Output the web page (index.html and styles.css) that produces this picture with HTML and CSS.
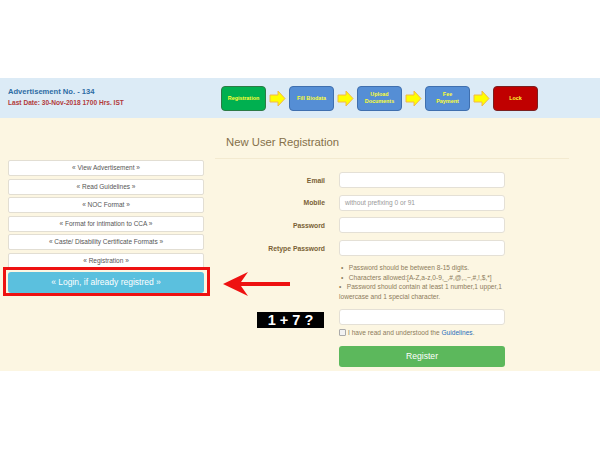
FILE: index.html
```html
<!DOCTYPE html>
<html>
  <head>
    <title>New User Registration</title>
    <link rel="stylesheet" href="styles.css">
  </head>
  <body>
    <div class="top-gap"></div>
    <div class="ad-bar">
      <div class="ad-info">
        <div class="ad-no">Advertisement No. - 134</div>
        <div class="ad-date">Last Date: 30-Nov-2018 1700 Hrs. IST</div>
      </div>
      <div class="steps">
        <div class="step done">Registration</div>
        <svg class="step-arrow" viewBox="0 0 17 17"><polygon points="1,5 9,5 9,1 16,8.5 9,16 9,12 1,12"/></svg>
        <div class="step">Fill Biodata</div>
        <svg class="step-arrow" viewBox="0 0 17 17"><polygon points="1,5 9,5 9,1 16,8.5 9,16 9,12 1,12"/></svg>
        <div class="step">Upload<br>Documents</div>
        <svg class="step-arrow" viewBox="0 0 17 17"><polygon points="1,5 9,5 9,1 16,8.5 9,16 9,12 1,12"/></svg>
        <div class="step">Fee<br>Payment</div>
        <svg class="step-arrow" viewBox="0 0 17 17"><polygon points="1,5 9,5 9,1 16,8.5 9,16 9,12 1,12"/></svg>
        <div class="step lock">Lock</div>
      </div>
    </div>

    <div class="panel">
      <div class="side">
        <a class="side-btn">« View Advertisement »</a>
        <a class="side-btn">« Read Guidelines »</a>
        <a class="side-btn">« NOC Format »</a>
        <a class="side-btn">« Format for intimation to CCA »</a>
        <a class="side-btn">« Caste/ Disability Certificate Formats »</a>
        <a class="side-btn">« Registration »</a>
        <a class="login-btn">« Login, if already registred »</a>
      </div>

      <div class="main">
        <h2 class="title">New User Registration</h2>
        <div class="form">
          <div class="row first">
            <label>Email</label>
            <div class="field"></div>
          </div>
          <div class="row">
            <label>Mobile</label>
            <div class="field placeholder">without prefixing 0 or 91</div>
          </div>
          <div class="row">
            <label>Password</label>
            <div class="field"></div>
          </div>
          <div class="row">
            <label>Retype Password</label>
            <div class="field"></div>
          </div>
          <div class="notes">
            <div>&bull;&nbsp;&nbsp; Password should be between 8-15 digits.</div>
            <div>&bull;&nbsp;&nbsp; Characters allowed:[A-Z,a-z,0-9,_,#,@,.,~,#,!,$,*]</div>
            <div>&bull;&nbsp;&nbsp; Password should contain at least 1 number,1 upper,1 lowercase and 1 special character.</div>
          </div>
          <div class="row captcha-row">
            <label><span class="captcha">1 + 7 ?</span></label>
            <div class="field"></div>
          </div>
          <div class="agree">
            <span class="box"></span>I have read and understood the <a>Guidelines</a>.
          </div>
          <div class="register">Register</div>
        </div>
      </div>

      <div class="mark-frame"></div>
      <svg class="mark-arrow" viewBox="0 0 70 26">
        <polygon points="1,13 26,1 19,11 68,11 68,15 19,15 26,25"/>
      </svg>
    </div>
  </body>
</html>
```

FILE: styles.css
```css
body {
  margin: 0;
  background: #fff;
  font-family: "Liberation Sans", Arial, sans-serif;
  color: #555;
}

.top-gap {
  height: 78px;
}

.ad-bar {
  display: flex;
  align-items: center;
  height: 40px;
  background: #dcebf6;
}

.ad-info {
  width: 213px;
  padding-left: 8px;
  padding-bottom: 4px;
}

.ad-no {
  font-size: 7.6px;
  font-weight: bold;
  color: #2e6da4;
  line-height: 13px;
}

.ad-date {
  font-size: 6.6px;
  font-weight: bold;
  color: #b23a3a;
  line-height: 10px;
}

.steps {
  display: flex;
  align-items: center;
}

.step {
  width: 45px;
  height: 25px;
  box-sizing: border-box;
  display: flex;
  align-items: center;
  justify-content: center;
  text-align: center;
  background: #558ed5;
  border: 1px solid #3f6fae;
  border-radius: 4px;
  color: #ffff33;
  font-size: 5.4px;
  font-weight: bold;
  line-height: 7px;
}

.step.done {
  background: #00b050;
  border-color: #2c7a45;
}

.step.lock {
  background: #c00000;
  border-color: #7a2020;
}

.step-arrow {
  width: 17px;
  height: 17px;
  margin: 0 3px;
  fill: #ffff00;
  stroke: #f2b84b;
  stroke-width: 1;
}

.panel {
  position: relative;
  display: flex;
  background: #fcf6e2;
  padding-bottom: 4px;
}

.side {
  width: 196px;
  margin-left: 8px;
  padding-top: 42px;
  display: flex;
  flex-direction: column;
  gap: 2.6px;
}

.side-btn {
  height: 16px;
  box-sizing: border-box;
  background: #fff;
  border: 1px solid #e2ded3;
  border-radius: 2px;
  font-size: 6.5px;
  line-height: 14px;
  text-align: center;
  color: #555;
}

.login-btn {
  height: 21px;
  background: #5bc0de;
  border-radius: 3px;
  color: #fff;
  font-size: 8.5px;
  line-height: 21px;
  text-align: center;
}

.main {
  margin-left: 11px;
  width: 354px;
}

.title {
  margin: 16px 0 0;
  padding: 0 0 8px 11px;
  font-size: 11.3px;
  font-weight: normal;
  line-height: 16px;
  color: #85704a;
  border-bottom: 1px solid #f3ead0;
}

.form {
  padding-top: 13px;
}

.row {
  display: flex;
  align-items: center;
  margin-top: 6.7px;
}

.row.first {
  margin-top: 0;
}

.row label {
  width: 110px;
  margin-right: 14px;
  text-align: right;
  font-size: 6.8px;
  font-weight: bold;
  color: #7a5f35;
}

.field {
  width: 166px;
  height: 16px;
  box-sizing: border-box;
  background: #fff;
  border: 1px solid #e4e0d6;
  border-radius: 3px;
}

.placeholder {
  padding-left: 5px;
  font-size: 6.6px;
  line-height: 14px;
  color: #999;
}

.notes {
  width: 166px;
  margin: 7px 0 0 124px;
  font-size: 6.6px;
  line-height: 9.6px;
  color: #8d7c5c;
}

.notes div {
  padding-left: 2px;
}

.notes div:last-child {
  padding-left: 0;
}

.captcha-row {
  margin-top: 7.4px;
  align-items: flex-start;
}

.captcha {
  display: inline-block;
  width: 67px;
  height: 16px;
  margin-top: 3px;
  margin-right: 1px;
  background: #000;
  color: #fff;
  font-size: 14.5px;
  line-height: 16px;
  text-align: center;
  font-weight: bold;
}

.agree {
  margin: 0.5px 0 0 124px;
  font-size: 6.6px;
  line-height: 9px;
  color: #8d7c5c;
}

.agree .box {
  display: inline-block;
  width: 5px;
  height: 5px;
  margin-right: 2px;
  vertical-align: -0.5px;
  border: 1px solid #aaa;
  border-radius: 1px;
  background: #f2f2f2;
}

.agree a {
  color: #2a6ebb;
}

.register {
  width: 166px;
  height: 21px;
  margin: 8.5px 0 0 124px;
  background: #5cb85c;
  border-radius: 3px;
  color: #fff;
  font-size: 8.6px;
  line-height: 21px;
  text-align: center;
}

/* annotation overlays */
.mark-frame {
  position: absolute;
  left: 3px;
  top: 149px;
  width: 207px;
  height: 29px;
  box-sizing: border-box;
  border: 3px solid #ee1111;
}

.mark-arrow {
  position: absolute;
  left: 222px;
  top: 153px;
  width: 70px;
  height: 26px;
  fill: #ee1111;
}
```
